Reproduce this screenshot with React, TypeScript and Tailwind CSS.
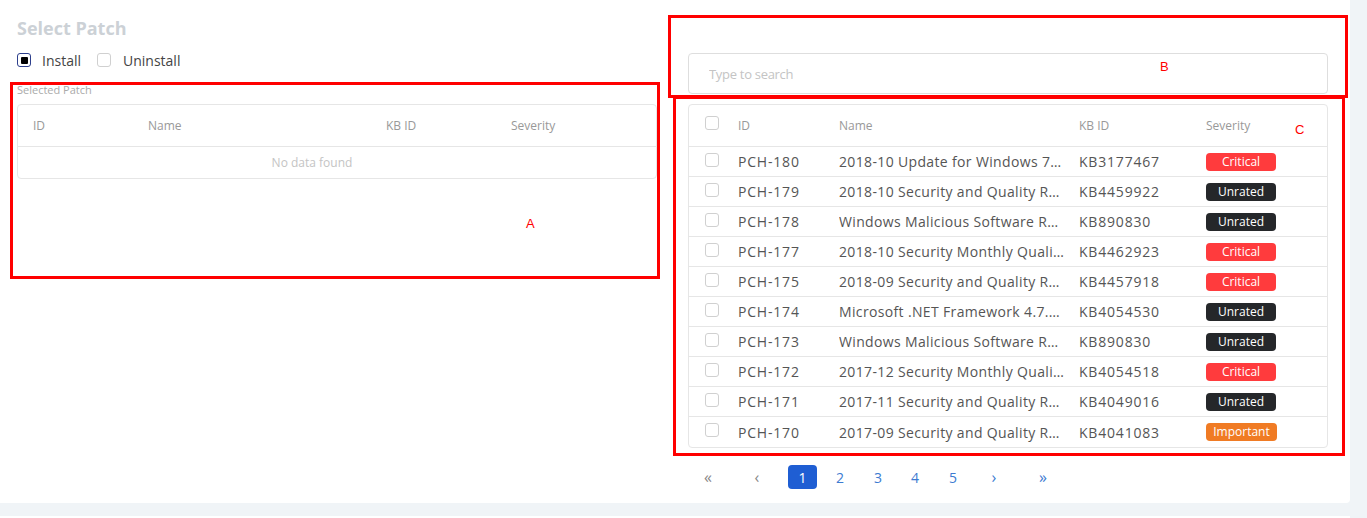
import { useState } from "react";

type Severity = "Critical" | "Unrated" | "Important";

interface Patch {
  id: string;
  name: string;
  kb: string;
  severity: Severity;
}

const patches: Patch[] = [
  { id: "PCH-180", name: "2018-10 Update for Windows 7 for x64-based Systems", kb: "KB3177467", severity: "Critical" },
  { id: "PCH-179", name: "2018-10 Security and Quality Rollup for .NET", kb: "KB4459922", severity: "Unrated" },
  { id: "PCH-178", name: "Windows Malicious Software Removal Tool", kb: "KB890830", severity: "Unrated" },
  { id: "PCH-177", name: "2018-10 Security Monthly Quality Rollup", kb: "KB4462923", severity: "Critical" },
  { id: "PCH-175", name: "2018-09 Security and Quality Rollup for .NET", kb: "KB4457918", severity: "Critical" },
  { id: "PCH-174", name: "Microsoft .NET Framework 4.7.2 for Windows 7", kb: "KB4054530", severity: "Unrated" },
  { id: "PCH-173", name: "Windows Malicious Software Removal Tool", kb: "KB890830", severity: "Unrated" },
  { id: "PCH-172", name: "2017-12 Security Monthly Quality Rollup", kb: "KB4054518", severity: "Critical" },
  { id: "PCH-171", name: "2017-11 Security and Quality Rollup for .NET", kb: "KB4049016", severity: "Unrated" },
  { id: "PCH-170", name: "2017-09 Security and Quality Rollup for .NET", kb: "KB4041083", severity: "Important" },
];

const badgeColors: Record<Severity, string> = {
  Critical: "bg-[#ff3b3d] w-[70px]",
  Unrated: "bg-[#25272a] w-[70px]",
  Important: "bg-[#f07b24] w-[71px]",
};

const Checkbox = () => (
  <span className="block w-[14px] h-[14px] rounded-[3px] border border-[#d0d0d0] bg-white" />
);

const SeverityBadge = ({ severity }: { severity: Severity }) => (
  <span
    className={`flex items-center justify-center h-[18px] rounded-[4px] text-[12px] leading-none tracking-normal text-white ${badgeColors[severity]}`}
  >
    {severity}
  </span>
);

// red annotation boxes drawn over the screenshot
const Marker = ({ className, label, labelClass }: { className: string; label: string; labelClass: string }) => (
  <div className={`absolute border-[3px] border-[#ff0000] pointer-events-none ${className}`}>
    <span className={`absolute text-[13px] text-[#ff0000] ${labelClass}`} style={{ fontFamily: '"Liberation Sans", sans-serif' }}>
      {label}
    </span>
  </div>
);

const App = () => {
  const [mode, setMode] = useState<"install" | "uninstall">("install");
  const [search, setSearch] = useState("");

  return (
    <div
      className="relative w-[1367px] h-[518px] bg-[#f0f4f7] overflow-hidden text-[#555]"
      style={{ fontFamily: '"Open Sans", "Noto Sans", sans-serif' }}
    >
      <div className="flex w-[1350px] h-[503px] bg-white rounded-br-[4px]">
        {/* left side: selected patches */}
        <div className="w-[657px] pl-[17px] pt-[15px]">
          <h2 className="text-[18px] font-bold text-[#ccd1d6] leading-[26px]">Select Patch</h2>
          <div className="flex items-center mt-[9px] h-[20px] text-[14px] text-[#444]">
            <button className="flex items-center gap-[11px]" onClick={() => setMode("install")}>
              <span
                className={`flex items-center justify-center w-[14px] h-[14px] rounded-[3px] border ${
                  mode === "install" ? "border-[#2d3f8c]" : "border-[#d0d0d0]"
                }`}
              >
                {mode === "install" && <span className="block w-[7px] h-[7px] rounded-[1px] bg-black" />}
              </span>
              Install
            </button>
            <button className="flex items-center gap-[12px] ml-[16px]" onClick={() => setMode("uninstall")}>
              <span
                className={`flex items-center justify-center w-[14px] h-[14px] rounded-[3px] border ${
                  mode === "uninstall" ? "border-[#2d3f8c]" : "border-[#d0d0d0]"
                }`}
              >
                {mode === "uninstall" && <span className="block w-[7px] h-[7px] rounded-[1px] bg-black" />}
              </span>
              Uninstall
            </button>
          </div>
          <div className="mt-[13px] text-[11px] leading-[14px] text-[#aaa]">Selected Patch</div>
          <div className="mt-[7px] w-[640px] border border-[#e6e6e6] rounded-[4px]">
            <div className="grid grid-cols-[115px_238px_125px_1fr] items-center h-[42px] pl-[15px] text-[12px] text-[#999] border-b border-[#e6e6e6]">
              <span>ID</span>
              <span>Name</span>
              <span>KB ID</span>
              <span>Severity</span>
            </div>
            <div className="h-[31px] flex items-center justify-center pr-[50px] text-[12px] text-[#c4c4c4]">
              No data found
            </div>
          </div>
        </div>

        {/* right side: patch list */}
        <div className="ml-[31px] w-[640px] pt-[53px]">
          <input
            value={search}
            onChange={(e) => setSearch(e.target.value)}
            placeholder="Type to search"
            className="w-full h-[41px] px-[20px] border border-[#dedede] rounded-[4px] text-[13px] tracking-[-0.3px] placeholder-[#c4c4c4] outline-none"
          />
          <div className="mt-[10px] border border-[#e6e6e6] rounded-[4px]">
            <div className="grid grid-cols-[33px_101px_240px_127px_1fr] items-center h-[42px] pl-[16px] text-[12px] text-[#999] border-b border-[#e6e6e6]">
              <span className="-mt-[6px]">
                <Checkbox />
              </span>
              <span>ID</span>
              <span>Name</span>
              <span>KB ID</span>
              <span>Severity</span>
            </div>
            {patches.map((p, i) => (
              <div
                key={p.id}
                className={`grid grid-cols-[33px_101px_240px_127px_1fr] items-center h-[30px] pl-[16px] text-[14px] tracking-[0.8px] text-[#555] ${
                  i < patches.length - 1 ? "border-b border-[#e6e6e6]" : ""
                }`}
              >
                <span className="-mt-[4px]">
                  <Checkbox />
                </span>
                <span>{p.id}</span>
                <span className="min-w-0 truncate pr-[14px] tracking-[0.35px]">{p.name}</span>
                <span>{p.kb}</span>
                <span>
                  <SeverityBadge severity={p.severity} />
                </span>
              </div>
            ))}
          </div>

          {/* pagination */}
          <div className="flex items-center mt-[17px] h-[24px] text-[14px]">
            <span className="w-[30px] ml-[5px] text-center text-[16px] text-[#888]">«</span>
            <span className="w-[30px] ml-[19px] text-center text-[16px] text-[#888]">‹</span>
            <span className="w-[29px] h-[24px] ml-[16px] flex items-center justify-center rounded-[4px] bg-[#1f5ed3] text-white">
              1
            </span>
            <span className="w-[30px] ml-[8px] text-center text-[#3d7bd1]">2</span>
            <span className="w-[30px] ml-[8px] text-center text-[#3d7bd1]">3</span>
            <span className="w-[30px] ml-[7px] text-center text-[#3d7bd1]">4</span>
            <span className="w-[30px] ml-[8px] text-center text-[#3d7bd1]">5</span>
            <span className="w-[30px] ml-[11px] text-center text-[16px] text-[#3d7bd1]">›</span>
            <span className="w-[30px] ml-[19px] text-center text-[16px] text-[#3d7bd1]">»</span>
          </div>
        </div>
      </div>
      <div className="absolute left-0 top-[516px] w-[1350px] h-[4px] bg-white" />

      <Marker className="left-[10px] top-[82px] w-[650px] h-[197px]" label="A" labelClass="left-[513px] top-[129px]" />
      <Marker className="left-[668px] top-[15px] w-[680px] h-[83px]" label="B" labelClass="left-[489px] top-[39px]" />
      <Marker className="left-[673px] top-[96px] w-[672px] h-[360px]" label="C" labelClass="left-[619px] top-[21px]" />
    </div>
  );
};

export default App;
